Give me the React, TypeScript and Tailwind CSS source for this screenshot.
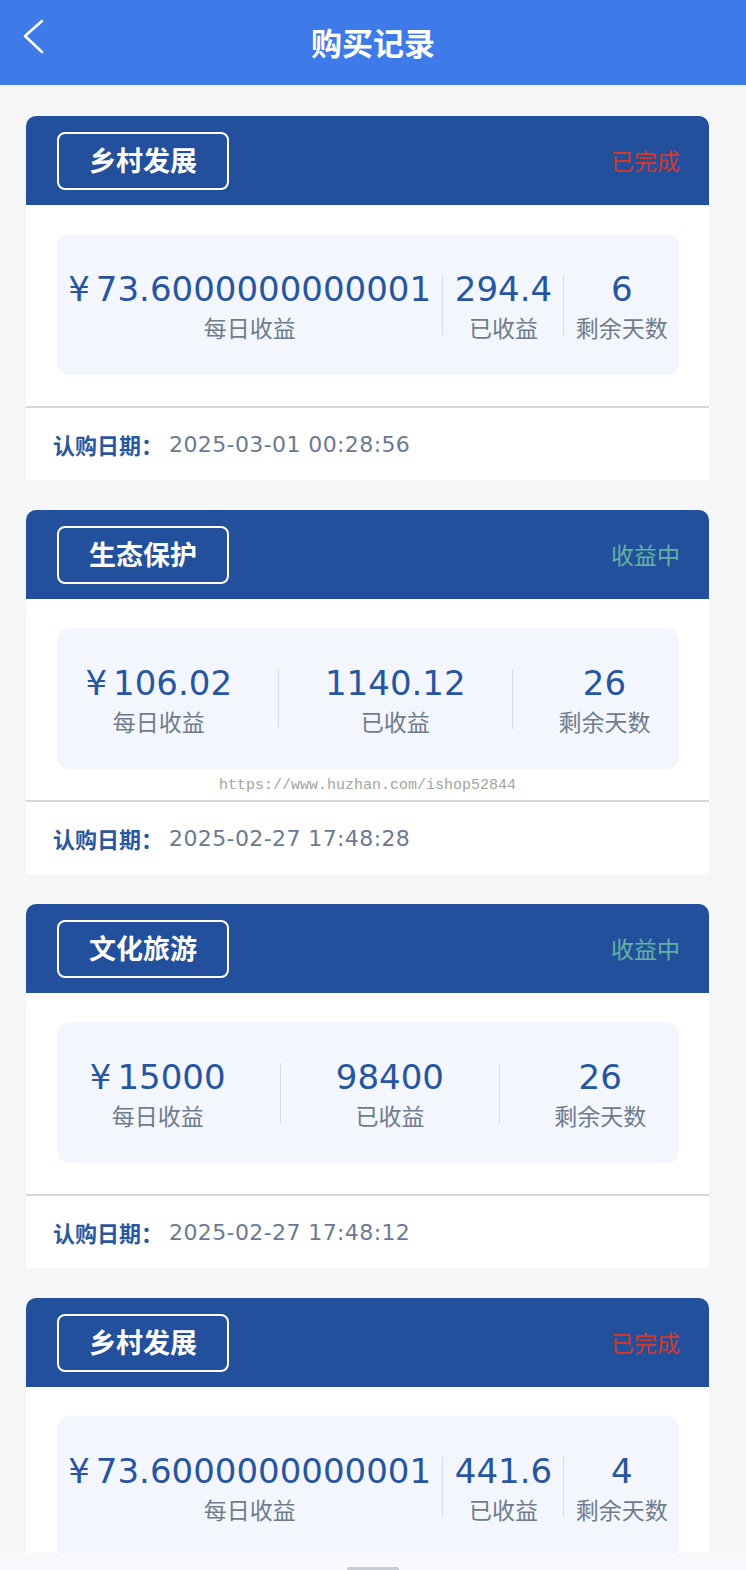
import React from 'react';

type Record = {
  name: string;
  status: 'done' | 'earning';
  daily: string;
  earned: string;
  days: string;
  date?: string;
  watermark?: boolean;
};

// last record is cut off by the bottom bar, its date row lies below the fold
const records: Record[] = [
  { name: '乡村发展', status: 'done', daily: '73.6000000000001', earned: '294.4', days: '6', date: '2025-03-01 00:28:56' },
  { name: '生态保护', status: 'earning', daily: '106.02', earned: '1140.12', days: '26', date: '2025-02-27 17:48:28', watermark: true },
  { name: '文化旅游', status: 'earning', daily: '15000', earned: '98400', days: '26', date: '2025-02-27 17:48:12' },
  { name: '乡村发展', status: 'done', daily: '73.6000000000001', earned: '441.6', days: '4' },
];

const Stat = ({ value, label, yen }: { value: string; label: string; yen?: boolean }) => (
  <div className="flex flex-col items-center px-[11px]">
    <div className="flex items-center whitespace-nowrap font-['DejaVu_Sans',sans-serif] text-[34px] leading-[42px] text-[#2855a2]">
      {yen && <span className="mr-[6px]">¥</span>}
      {value}
    </div>
    <div className="mt-[2px] whitespace-nowrap font-['Noto_Sans_CJK_SC',sans-serif] text-[23px] leading-[30px] text-[#6f7b8e]">
      {label}
    </div>
  </div>
);

const RecordCard = ({ r }: { r: Record }) => (
  <div className="relative w-[683px] shrink-0">
    <div className="flex h-[89px] items-center justify-between rounded-t-[10px] bg-[#23509c] pl-[31px] pr-[29px]">
      <div className="flex h-[58px] w-[172px] items-center justify-center rounded-[8px] border-2 border-white font-['Noto_Sans_CJK_SC',sans-serif] text-[27px] font-bold text-white">
        {r.name}
      </div>
      <span
        className={
          r.status === 'done'
            ? "font-['Noto_Sans_CJK_SC',sans-serif] text-[23px] text-[#d03a2e]"
            : "font-['Noto_Sans_CJK_SC',sans-serif] text-[23px] text-[#62b3a0]"
        }
      >
        {r.status === 'done' ? '已完成' : '收益中'}
      </span>
    </div>

    <div className="bg-white pb-[31px] pl-[31px] pr-[30px] pt-[29px]">
      <div className="flex h-[141px] items-center justify-around rounded-[12px] bg-[#f3f7fd]">
        <Stat value={r.daily} label="每日收益" yen />
        <div className="h-[60px] w-px bg-[#d2dcea]" />
        <Stat value={r.earned} label="已收益" />
        <div className="h-[60px] w-px bg-[#d2dcea]" />
        <Stat value={r.days} label="剩余天数" />
      </div>
    </div>

    {r.date && (
      <>
        <div className="h-[2px] bg-[#d8d8d8]" />
        <div className="flex h-[72px] items-center bg-white px-[27px]">
          <span className="font-['Noto_Sans_CJK_SC',sans-serif] text-[22px] font-bold text-[#2b579f]">认购日期：</span>
          <span className="ml-[6px] font-['DejaVu_Sans',sans-serif] text-[22px] tracking-[0.4px] text-[#6b7a92]">
            {r.date}
          </span>
        </div>
      </>
    )}

    {r.watermark && (
      <div className="absolute left-0 right-0 top-[265px] text-center font-['Liberation_Mono',monospace] text-[15px] text-[#a3a3a3]">
        https://www.huzhan.com/ishop52844
      </div>
    )}
  </div>
);

export default function App() {
  return (
    <div className="relative h-[1570px] w-[746px] overflow-hidden bg-[#f6f6f6]">
      <header className="relative flex h-[85px] items-center justify-center bg-[#3e7be8]">
        <svg
          className="absolute left-[22px] top-[19px]"
          width="24"
          height="36"
          viewBox="0 0 24 36"
          fill="none"
          stroke="white"
          strokeWidth="2.6"
          strokeLinecap="round"
          strokeLinejoin="round"
        >
          <polyline points="20,2 3,17 20,33" />
        </svg>
        <h1 className="font-['Noto_Sans_CJK_SC',sans-serif] text-[31px] font-bold text-white">购买记录</h1>
      </header>

      <main className="flex flex-col gap-[30px] pl-[26px] pt-[31px]">
        {records.map((r, i) => (
          <RecordCard key={i} r={r} />
        ))}
      </main>

      <div className="absolute bottom-0 left-0 right-0 flex h-[17px] items-end justify-center bg-[#f7f9fd]">
        <div className="h-[3px] w-[52px] rounded-t-[2px] bg-[#c9ccd2]" />
      </div>
    </div>
  );
}
